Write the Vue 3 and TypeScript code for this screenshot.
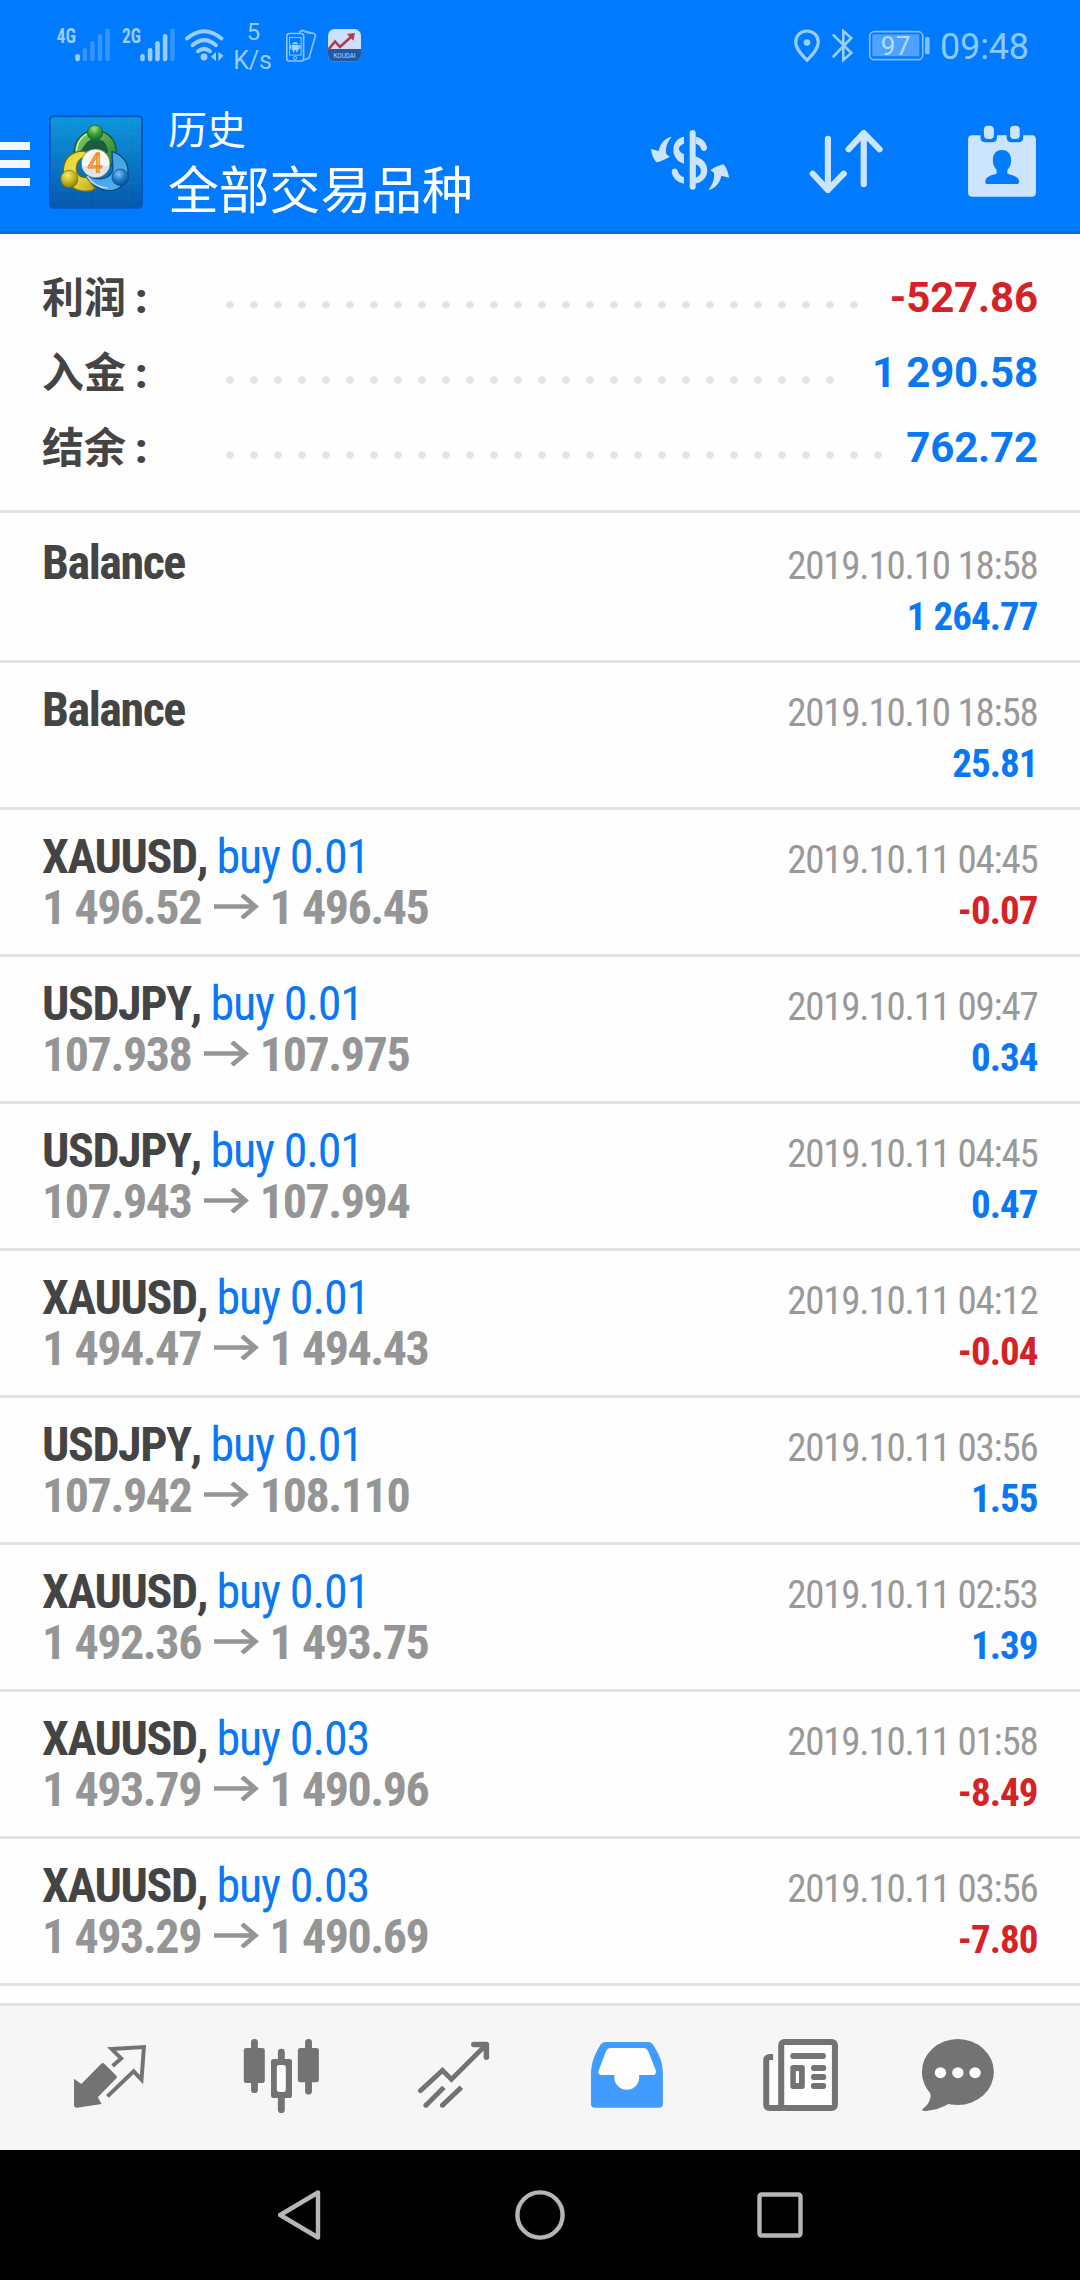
<script setup lang="ts">
interface SummaryLine {
  label: string
  value: string
  dots: number
  negative?: boolean
}

interface Deal {
  symbol: string
  volume?: string
  open?: string
  close?: string
  time: string
  profit: string
}

const summary: SummaryLine[] = [
  { label: '利润', value: '-527.86', dots: 27, negative: true },
  { label: '入金', value: '1 290.58', dots: 26 },
  { label: '结余', value: '762.72', dots: 28 },
]

const deals: Deal[] = [
  { symbol: 'Balance', time: '2019.10.10 18:58', profit: '1 264.77' },
  { symbol: 'Balance', time: '2019.10.10 18:58', profit: '25.81' },
  { symbol: 'XAUUSD', volume: '0.01', open: '1 496.52', close: '1 496.45', time: '2019.10.11 04:45', profit: '-0.07' },
  { symbol: 'USDJPY', volume: '0.01', open: '107.938', close: '107.975', time: '2019.10.11 09:47', profit: '0.34' },
  { symbol: 'USDJPY', volume: '0.01', open: '107.943', close: '107.994', time: '2019.10.11 04:45', profit: '0.47' },
  { symbol: 'XAUUSD', volume: '0.01', open: '1 494.47', close: '1 494.43', time: '2019.10.11 04:12', profit: '-0.04' },
  { symbol: 'USDJPY', volume: '0.01', open: '107.942', close: '108.110', time: '2019.10.11 03:56', profit: '1.55' },
  { symbol: 'XAUUSD', volume: '0.01', open: '1 492.36', close: '1 493.75', time: '2019.10.11 02:53', profit: '1.39' },
  { symbol: 'XAUUSD', volume: '0.03', open: '1 493.79', close: '1 490.96', time: '2019.10.11 01:58', profit: '-8.49' },
  { symbol: 'XAUUSD', volume: '0.03', open: '1 493.29', close: '1 490.69', time: '2019.10.11 03:56', profit: '-7.80' },
]

const isLoss = (value: string): boolean => value.startsWith('-')
</script>

<template>
  <div class="screen">
    <div class="status">
      <svg width="400" height="90" viewBox="0 0 400 90">
        <g fill="#99ccff">
          <text x="56.5" y="43" class="cond bold" font-size="21" textLength="19.5" lengthAdjust="spacingAndGlyphs">4G</text>
          <rect x="75.3" y="54" width="4.6" height="7.4" rx="2.3" />
          <g opacity=".35">
            <rect x="82.6" y="48" width="4.4" height="13" rx="2" />
            <rect x="90.2" y="41" width="4.4" height="20" rx="2" />
            <rect x="97.8" y="34" width="4.4" height="27" rx="2" />
            <rect x="105.4" y="28.5" width="4.4" height="32.5" rx="2" />
          </g>
          <text x="122" y="43" class="cond bold" font-size="21" textLength="19" lengthAdjust="spacingAndGlyphs">2G</text>
          <rect x="140.2" y="54" width="4.6" height="7.4" rx="2.3" />
          <rect x="147.8" y="48" width="4.6" height="13.4" rx="2.3" />
          <rect x="155.2" y="41" width="4.6" height="20.4" rx="2.3" />
          <rect x="162.8" y="34" width="4.6" height="27.4" rx="2.3" />
          <rect x="170.2" y="28.5" width="4.4" height="32.5" rx="2" opacity=".35" />
          <circle cx="204" cy="57" r="3.4" />
          <path d="M216 52v9l-5.2-4.2zM218.4 52v9l5.2-5.2z" />
          <text x="253.4" y="40.3" text-anchor="middle" class="robo" font-size="24.5" textLength="13.4" lengthAdjust="spacingAndGlyphs">5</text>
          <text x="233.3" y="68.8" class="robo" font-size="25" textLength="38.6">K/s</text>
        </g>
        <g fill="none" stroke="#99ccff" stroke-width="4" stroke-linecap="round">
          <path d="M187 38.5Q204 24 221.5 38.5" />
          <path d="M192.500 45.200Q204 35 216 45.200" />
          <path d="M198 51.200Q204 46.500 210 51.200" />
        </g>
        <g fill="none" stroke="#86c3ff" stroke-width="1.7">
          <rect x="286.800" y="33.500" width="16.800" height="27.500" rx="2.500" />
          <rect x="289.500" y="37.500" width="11.600" height="17.600" stroke-width="1.100" />
          <circle cx="295.200" cy="58" r="1.500" stroke-width="1.100" />
          <path d="M299 32.500l3-2 12.500 3.200 1 1.800-6.500 22.500-3 1.500h-2.200M304 31.500l7 2" />
        </g>
        <g fill="#a6d3ff">
          <path d="M291.700 44.200q3.500-4.400 7 0zM291.700 45h7v5.300h-7zM289.900 45h1.300v3.800h-1.300zM299.200 45h1.300v3.800h-1.300zM293 50.300h1.300v2h-1.300zM296.200 50.300h1.300v2h-1.300z" />
        </g>
        <clipPath id="badge"><rect x="328" y="29" width="33" height="32.500" rx="6.500" /></clipPath>
        <g clip-path="url(#badge)">
          <path fill="#cce0fa" d="M328 29h33v33h-33z" />
          <path fill="#1f5aaa" d="M328 49h33v13h-33z" />
          <path d="M328.500 49.500l6.500-8 5 5.500 11.500-10.500" fill="none" stroke="#b23a55" stroke-width="2.600" />
          <path d="M347 34l8-1-1.600 7.800z" fill="#b23a55" />
        </g>
        <text x="333.500" y="58.300" class="robo" font-size="6.500" fill="#b9d6f8" textLength="22" lengthAdjust="spacingAndGlyphs">KOUDAI</text>
      </svg>
      <svg width="300" height="90" viewBox="780 0 300 90">
        <path d="M807 31c-6.500 0-11.300 4.800-11.300 11.200 0 7 6.300 12.800 11.300 18 5-5.200 11.300-11 11.300-18C818.300 35.800 813.500 31 807 31z" fill="none" stroke="#99ccff" stroke-width="3.200" />
        <circle cx="807" cy="42.600" r="3.300" fill="#99ccff" />
        <path d="M833.500 35.200L851.300 53 843.300 60V31l8 7-17.800 18.500" fill="none" stroke="#99ccff" stroke-width="2.600" stroke-linecap="round" />
        <rect x="869.700" y="31.700" width="53" height="28" rx="4.500" fill="none" stroke="#7dbeff" stroke-width="1.700" />
        <rect x="872.300" y="34.300" width="47" height="22" fill="#4fa2ff" />
        <rect x="925" y="37" width="4.600" height="17.300" rx="1.600" fill="#80c0ff" />
        <text x="880.800" y="55" class="robo" font-size="26" fill="#b2dcff" textLength="29.500">97</text>
        <text x="940" y="59.300" class="robo" font-size="36" fill="#8dc8ff" textLength="89">09:48</text>
      </svg>
    </div>

    <header class="bar">
      <div class="burger"><i></i><i></i><i></i></div>
      <svg class="logo" width="94" height="94" viewBox="57 75 282 282">
        <defs>
          <linearGradient id="bg" x1="0" y1="0" x2="0" y2="1"><stop offset="0" stop-color="#0f96dc" /><stop offset=".5" stop-color="#0878c6" /><stop offset="1" stop-color="#0757ad" /></linearGradient>
          <linearGradient id="gr" x1="0" y1="0" x2="1" y2="1"><stop offset="0" stop-color="#8fce70" /><stop offset="1" stop-color="#1b7d28" /></linearGradient>
          <linearGradient id="ye" x1="0" y1="0" x2="1" y2="1"><stop offset="0" stop-color="#e3cf28" /><stop offset=".5" stop-color="#ece04c" /><stop offset="1" stop-color="#b9a412" /></linearGradient>
          <linearGradient id="bl" x1="0" y1="0" x2="1" y2="1"><stop offset="0" stop-color="#3a9be0" /><stop offset="1" stop-color="#57b2ee" /></linearGradient>
          <radialGradient id="gb" cx=".45" cy=".25" r=".75"><stop offset="0" stop-color="#a5e08c" /><stop offset=".5" stop-color="#3ba03c" /><stop offset="1" stop-color="#146b22" /></radialGradient>
          <radialGradient id="yb" cx=".4" cy=".3" r=".75"><stop offset="0" stop-color="#f3ec80" /><stop offset=".5" stop-color="#c8b81e" /><stop offset="1" stop-color="#857708" /></radialGradient>
          <radialGradient id="bb" cx=".4" cy=".3" r=".75"><stop offset="0" stop-color="#7cc6f5" /><stop offset=".5" stop-color="#1d7cc8" /><stop offset="1" stop-color="#0a4a92" /></radialGradient>
        </defs>
        <rect x="60" y="79" width="276" height="274" rx="10" fill="url(#bg)" stroke="#0759bd" stroke-width="6" />
        <path d="M96 82v268M146 82v268M196 82v268M246 82v268M296 82v268M63 130h270M63 180h270M63 230h270M63 280h270M63 325h270" stroke="#fff" stroke-opacity=".06" stroke-width="2" />
        <path d="M133 194C130 150 160 122 196 122s66 28 62 68c-1 16-8 30-20 42l-22-20c8-10 14-20 13-34-2-20-16-30-32-30s-32 12-34 30z" fill="url(#gr)" stroke="#125c25" stroke-width="4" />
        <path d="M152 186c8-22 24-34 46-34s36 14 36 34l-12 16h-58z" fill="#1c5c3a" />
        <path d="M168 184c-36-4-66 16-68 54 0 30 24 66 66 66 12 0 22-2 30-8l-26-34c-24 2-34-14-30-34 3-16 12-24 28-30z" fill="url(#ye)" stroke="#6f6a14" stroke-width="4" />
        <path d="M246 184c28 10 46 30 48 56 2 32-22 62-56 62-28 0-52-18-64-44 18 8 36 12 52 6 18-8 26-22 22-40z" fill="url(#bl)" stroke="#0c4a8c" stroke-width="4" />
        <path d="M172 258c10 18 30 34 60 36" fill="none" stroke="#a9dcfa" stroke-width="5" />
        <path d="M140 184c0-30 20-52 44-56" fill="none" stroke="#caeeb4" stroke-width="4" />
        <circle cx="195" cy="128" r="23" fill="url(#gb)" stroke="#145a22" stroke-width="2" />
        <circle cx="118" cy="267" r="26" fill="url(#yb)" stroke="#6f6a14" stroke-width="2" />
        <circle cx="271" cy="262" r="25" fill="url(#bb)" stroke="#0c4a8c" stroke-width="2" />
        <circle cx="197" cy="220" r="43" fill="#f6f6f6" stroke="#53734c" stroke-width="2" />
        <path d="M155 228a43 43 0 0 0 84 0z" fill="#dfe3ea" />
        <text x="195" y="247" text-anchor="middle" class="robo" font-size="78" fill="#ffd9a3" stroke="#ef8a26" stroke-width="4">4</text>
      </svg>
      <div class="titles">
        <div class="sub">历史</div>
        <div class="main">全部交易品种</div>
      </div>
      <div class="actions">
        <svg viewBox="-84 -75 468 432">
          <g fill="#cde4fe">
            <path id="turn" d="M95 65C78 68 60 84 56 108L33 102C35 118 41 134 50 142 62 139 78 132 89 125L78 116C76 98 82 80 95 65z" />
            <path d="M132 65v21c-20 6-20 24 0 31v29c-20-6-32-22-32-42s13-36 32-39z" />
            <path d="M95 171c0-13 17-14 19-1 3 9 9 14 18 16v20c-20-3-34-17-37-35z" />
            <rect x="149" y="45" width="18" height="179" rx="9" />
            <path d="M167 65c19 4 31 15 34 32 1 14-16 15-19 2-2-7-7-11-15-13z" />
            <path fill-rule="evenodd" d="M158 122c28 5 44 22 44 44s-16 38-40 41zM167 148v40c20-6 22-32 0-40z" />
            <use href="#turn" transform="rotate(180 150 145)" />
          </g>
        </svg>
        <svg viewBox="662 270 453 432" preserveAspectRatio="none">
          <path d="M836 416V570M792 521L836 570 882 521M940 553V399M896 448L940 399 986 448" fill="none" stroke="#cde4fe" stroke-width="18" stroke-linecap="round" stroke-linejoin="round" />
        </svg>
        <svg viewBox="1115 270 453 432" preserveAspectRatio="none">
          <rect x="1243" y="406" width="197" height="184" rx="12" fill="#cde4fe" />
          <path d="M1279 400h48v14a13 13 0 0 1-13 13h-22a13 13 0 0 1-13-13zM1355 400h48v14a13 13 0 0 1-13 13h-22a13 13 0 0 1-13-13z" fill="#007aff" />
          <rect x="1289" y="377" width="29" height="40" rx="12" fill="#cde4fe" />
          <rect x="1365" y="377" width="28" height="40" rx="12" fill="#cde4fe" />
          <path d="M1341 450c19 0 27 14 27 31 0 14-5 22-11 29v11c20 5 34 10 34 24 0 5-2 7-7 7h-84c-5 0-7-2-7-7 0-14 14-19 33-24v-11c-6-7-11-15-11-29 0-17 8-31 26-31z" fill="#007aff" />
        </svg>
      </div>
    </header>

    <section class="summary">
      <div v-for="line in summary" :key="line.label" class="sum-row">
        <span class="label">{{ line.label }}<b>:</b></span>
        <span class="dots" :style="{ width: line.dots * 24 + 'px' }"></span>
        <span class="total" :class="line.negative ? 'loss' : 'gain'">{{ line.value }}</span>
      </div>
    </section>

    <main class="deals">
      <div v-for="(deal, i) in deals" :key="i" class="deal">
        <div class="info">
          <div class="name">
            {{ deal.symbol }}<template v-if="deal.volume">, <span class="side">buy {{ deal.volume }}</span></template>
          </div>
          <div v-if="deal.open" class="price">
            <span>{{ deal.open }}</span>
            <svg width="45" height="25" viewBox="0 0 45 25"><path d="M0 12.500H42M28 1L41.500 12.500 28 24" fill="none" stroke="#959595" stroke-width="4.600" /></svg>
            <span>{{ deal.close }}</span>
          </div>
        </div>
        <div class="result">
          <div class="time">{{ deal.time }}</div>
          <div class="profit" :class="isLoss(deal.profit) ? 'loss' : 'gain'">{{ deal.profit }}</div>
        </div>
      </div>
    </main>

    <nav class="tabs">
      <svg viewBox="69.700 138 499.500 432" preserveAspectRatio="none">
        <path d="M294 311q5-4 9 0l35 36q3 4 0 8L284 412l11 20-72 11q-8 0-8-8V356l21 16z" fill="#737373" />
        <path d="M327 318L352 295 324 267 418 261 411 359 388 334 312 409" fill="none" stroke="#737373" stroke-width="11.500" />
      </svg>
      <svg viewBox="569.200 138 499.500 432" preserveAspectRatio="none">
        <g fill="#737373">
          <rect x="729" y="237" width="20" height="162" rx="10" />
          <rect x="708" y="264" width="61" height="105" rx="7" />
          <rect x="886" y="237" width="20" height="167" rx="10" />
          <rect x="865" y="264" width="61" height="103" rx="7" />
          <rect x="807" y="266" width="20" height="193" rx="10" />
          <rect x="787" y="297" width="61" height="117" rx="7" />
        </g>
        <rect x="804" y="315" width="26" height="81" rx="7" fill="#fdfdfd" />
      </svg>
      <svg viewBox="1068.700 138 499.500 432" preserveAspectRatio="none">
        <g fill="none" stroke="#737373" stroke-width="14.500">
          <path d="M1221 392L1285 331 1311 358 1409 257" stroke-linecap="round" />
          <path d="M1376 253.500H1412.500V292" stroke-linecap="round" stroke-linejoin="round" stroke-width="16" />
          <path d="M1237 436L1289 382M1285 436L1340 382" />
        </g>
        <g fill="#737373"><circle cx="1237" cy="436" r="7.500" /><circle cx="1285" cy="436" r="7.500" /></g>
      </svg>
      <svg viewBox="0 138 499.500 432" preserveAspectRatio="none">
        <path d="M190 246H314Q322 246 327 253C345 280 357 305 357 345V432Q357 443 346 443H159Q148 443 148 432V345C148 305 160 280 177 253Q182 246 190 246z" fill="#429cff" />
        <path d="M205 264H300Q310 264 314 273L336 330Q339 345 328 345H288V353A36 36 0 0 1 216 353V345H179Q168 345 170 333L192 273Q196 264 205 264z" fill="#fdfdfd" />
      </svg>
      <svg viewBox="499.500 138 499.500 432" preserveAspectRatio="none">
        <rect x="657" y="291" width="44" height="153" rx="11" fill="#fdfdfd" />
        <path d="M677 283h20v20h-20z" fill="#f6f6f6" />
        <path d="M677 291H668Q657 291 657 302V434Q657 444 668 444H705" fill="none" stroke="#737373" stroke-width="17.500" />
        <rect x="700.500" y="246" width="156" height="198" rx="9" fill="#fdfdfd" stroke="#737373" stroke-width="17.500" />
        <g fill="#737373">
          <rect x="727" y="279" width="103" height="18" rx="8" />
          <rect x="727" y="315" width="42" height="72" rx="8" />
          <rect x="787" y="315" width="44" height="18" rx="8" />
          <rect x="787" y="342" width="44" height="18" rx="8" />
          <rect x="787" y="369" width="44" height="18" rx="8" />
        </g>
        <rect x="743" y="333" width="9" height="36" fill="#fdfdfd" />
      </svg>
      <svg viewBox="999 138 499.500 432" preserveAspectRatio="none">
        <ellipse cx="1213.500" cy="336" rx="104.500" ry="99" fill="#737373" />
        <path d="M1128 390Q1138 402 1132 420 1126 436 1112 446 1106 453 1120 453 1158 450 1190 430z" fill="#737373" />
        <circle cx="1163" cy="338" r="16.500" fill="#fff" /><circle cx="1213.500" cy="338" r="16.500" fill="#fff" /><circle cx="1263.500" cy="338" r="16.500" fill="#fff" />
      </svg>
    </nav>

    <footer class="sysnav">
      <svg viewBox="0 0 50 50"><path d="M5.200 25L43 2.500V47.500z" fill="none" stroke="#b6b6b6" stroke-width="4.400" stroke-linejoin="round" /></svg>
      <svg viewBox="0 0 50 50"><circle cx="25" cy="25" r="22.600" fill="none" stroke="#b6b6b6" stroke-width="4.400" /></svg>
      <svg viewBox="0 0 50 50"><rect x="4.500" y="4.500" width="41" height="41" rx="2" fill="none" stroke="#b6b6b6" stroke-width="4.400" /></svg>
    </footer>
  </div>
</template>

<style>
body {
  margin: 0;
  background: #fff;
}
</style>

<style scoped>
.screen {
  width: 1080px;
  height: 2280px;
  display: flex;
  flex-direction: column;
  overflow: hidden;
  background: #fefefe;
  font-family: Roboto, 'Noto Sans CJK SC', sans-serif;
}
svg {
  display: block;
  flex: none;
}
.robo {
  font-family: Roboto, sans-serif;
}
.cond {
  font-family: 'Roboto Condensed', Roboto, sans-serif;
}
.bold {
  font-weight: 700;
}
.status {
  height: 90px;
  flex: none;
  display: flex;
  justify-content: space-between;
  background: #007aff;
}
.bar {
  box-sizing: border-box;
  height: 144px;
  flex: none;
  display: flex;
  align-items: flex-start;
  background: #007aff;
  border-bottom: 3px solid #0b6bdd;
}
.burger {
  width: 30px;
  padding-top: 52px;
  display: flex;
  flex-direction: column;
  gap: 10px;
}
.burger i {
  height: 8px;
  background: #f2f8ff;
}
.logo {
  margin: 25px 0 0 19px;
}
.titles {
  margin-left: 25px;
  padding-top: 13px;
  color: #fff;
  white-space: nowrap;
}
.sub {
  font-size: 39px;
  line-height: 56px;
}
.main {
  font-size: 50.800px;
  line-height: 66px;
}
.actions {
  margin-left: auto;
  display: flex;
}
.actions svg {
  width: 156px;
  height: 144px;
}
.summary {
  flex: none;
  padding: 26px 42px 25px;
  border-bottom: 3px solid #e3e3e3;
}
.sum-row {
  height: 75px;
  display: flex;
  font-size: 42px;
  line-height: 75px;
  font-weight: 700;
}
.label {
  width: 176px;
  padding-top: 1px;
  color: #444;
}
.label b {
  margin-left: 9px;
}
.dots {
  height: 75px;
  background: radial-gradient(circle at 12px 45px, #e3e3e3 3.400px, transparent 4.200px) 0 0 / 24px 75px repeat-x;
}
.total {
  margin-left: auto;
  letter-spacing: -0.150px;
}
.loss {
  color: #d62226;
}
.gain {
  color: #0a78f5;
}
.deals {
  flex: 1;
  min-height: 0;
  font-family: 'Roboto Condensed', Roboto, sans-serif;
}
.deal {
  height: 144px;
  display: flex;
  justify-content: space-between;
  padding: 0 42.400px 0 42px;
  border-bottom: 3px solid #e3e3e3;
  white-space: nowrap;
}
.deal:first-child {
  padding-top: 3px;
}
.info {
  padding-top: 21px;
  font-size: 48px;
  line-height: 51px;
  font-weight: 700;
  letter-spacing: -1.450px;
}
.name {
  color: #444;
  font-kerning: none;
}
.side {
  color: #0a78f5;
  font-weight: 400;
  letter-spacing: -1.150px;
}
.price {
  display: flex;
  color: #959595;
}
.price svg {
  margin: 12px 10.500px 0 13px;
}
.result {
  padding-top: 25px;
  font-size: 39px;
  line-height: 51px;
  text-align: right;
}
.time {
  color: #999;
  letter-spacing: -1.200px;
}
.profit {
  font-weight: 700;
  letter-spacing: -0.950px;
}
.tabs {
  flex: none;
  height: 144px;
  display: flex;
  padding: 0 24px;
  background: #f6f6f6;
  border-top: 3px solid #e2e2e2;
}
.tabs svg {
  width: 172px;
  height: 144px;
}
.sysnav {
  flex: none;
  height: 130px;
  display: flex;
  justify-content: space-around;
  align-items: center;
  padding: 0 180px;
  background: #000;
}
.sysnav svg {
  width: 50px;
  height: 50px;
}
</style>
